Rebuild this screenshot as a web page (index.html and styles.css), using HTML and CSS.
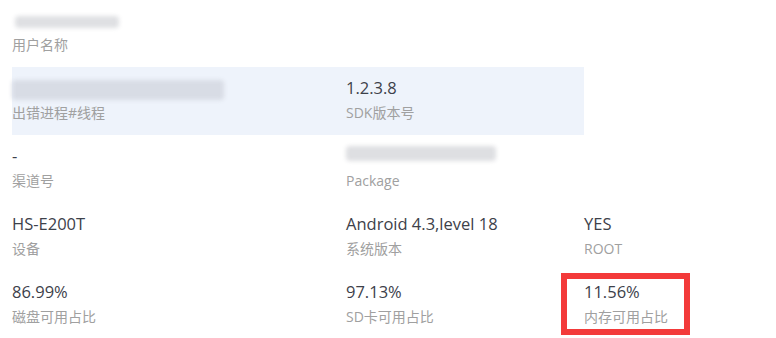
FILE: index.html
```html
<!DOCTYPE html>
<html lang="zh-CN">
<head>
    <meta charset="UTF-8">
    <meta name="viewport" content="width=device-width, initial-scale=1.0">
    <title>设备信息</title>
    <link rel="stylesheet" href="styles.css">
</head>
<body>
    <div class="info-grid">
        <div class="cell wide">
            <div class="value"><span class="masked name-mask"></span></div>
            <div class="label">用户名称</div>
        </div>

        <div class="cell highlight">
            <div class="value"><span class="masked thread-mask"></span></div>
            <div class="label">出错进程#线程</div>
        </div>
        <div class="cell highlight">
            <div class="value">1.2.3.8</div>
            <div class="label">SDK版本号</div>
        </div>
        <div class="cell"></div>

        <div class="cell">
            <div class="value">-</div>
            <div class="label">渠道号</div>
        </div>
        <div class="cell">
            <div class="value"><span class="masked package-mask"></span></div>
            <div class="label">Package</div>
        </div>
        <div class="cell"></div>

        <div class="cell">
            <div class="value">HS-E200T</div>
            <div class="label">设备</div>
        </div>
        <div class="cell">
            <div class="value">Android 4.3,level 18</div>
            <div class="label">系统版本</div>
        </div>
        <div class="cell">
            <div class="value">YES</div>
            <div class="label">ROOT</div>
        </div>

        <div class="cell">
            <div class="value">86.99%</div>
            <div class="label">磁盘可用占比</div>
        </div>
        <div class="cell">
            <div class="value">97.13%</div>
            <div class="label">SD卡可用占比</div>
        </div>
        <div class="cell marked">
            <div class="value">11.56%</div>
            <div class="label">内存可用占比</div>
        </div>
    </div>
</body>
</html>
```

FILE: styles.css
```css
body {
    margin: 0;
    padding: 0;
    background: #ffffff;
    font-family: "Open Sans", "Noto Sans CJK SC", sans-serif;
}
.info-grid {
    display: grid;
    grid-template-columns: 334px 238px 1fr;
    grid-auto-rows: 68px;
    padding: 0 12px;
    margin-top: -1px;
}
.cell {
    position: relative;
    padding-top: 11px;
}
.cell.wide {
    grid-column: 1 / -1;
}
.cell.highlight {
    background: #eef3fb;
}
.value {
    height: 20px;
    font-size: 16.5px;
    line-height: 20px;
    color: #3d414a;
}
.label {
    margin-top: 6px;
    font-size: 14px;
    line-height: 18px;
    color: #a0a0a0;
}
.masked {
    display: inline-block;
    vertical-align: middle;
    background: #d9dbe0;
    filter: blur(2px);
    border-radius: 4px;
}
.name-mask {
    width: 104px;
    height: 12px;
    margin-left: 3px;
    background: #dfe0e3;
}
.thread-mask {
    width: 212px;
    height: 20px;
    background: #d8dce5;
}
.package-mask {
    width: 150px;
    height: 15px;
    margin-top: -8px;
    background: #dedfe2;
}
.cell.marked::after {
    content: "";
    position: absolute;
    left: -23px;
    top: 2px;
    width: 117px;
    height: 50px;
    border: 6px solid #f33a3a;
}
```
